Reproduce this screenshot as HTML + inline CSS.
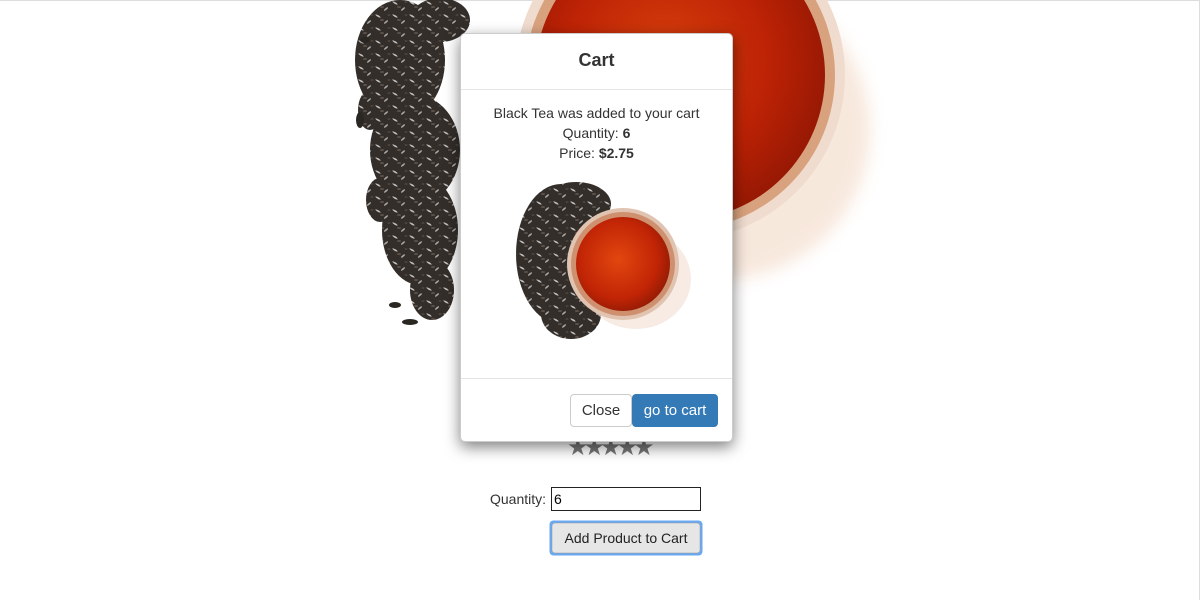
<!DOCTYPE html>
<html><head><style>
body{margin:0;width:1200px;height:600px;overflow:hidden;background:#fff;font-family:"Liberation Sans",sans-serif;position:relative;color:#333}
.abs{position:absolute}
.modal{left:460px;top:33px;width:273px;height:409px;background:#fff;border-radius:5px;box-shadow:0 5px 15px rgba(0,0,0,.5);border:1px solid rgba(0,0,0,.2);box-sizing:border-box}
.btn{position:absolute;top:360px;height:33px;box-sizing:border-box;border-radius:4px;font-size:15px;line-height:31px;text-align:center}
</style></head><body>
<svg class="abs" style="left:0;top:0" width="1200" height="600">
<defs>
<radialGradient id="tea" cx="0.45" cy="0.45" r="0.6"><stop offset="0" stop-color="#d8400c"/><stop offset="0.6" stop-color="#bc2205"/><stop offset="1" stop-color="#921703"/></radialGradient>
<radialGradient id="tea2" cx="0.45" cy="0.45" r="0.6"><stop offset="0" stop-color="#e2470f"/><stop offset="0.7" stop-color="#c02405"/><stop offset="1" stop-color="#8e1a05"/></radialGradient>
<filter id="b"><feGaussianBlur stdDeviation="8"/></filter>
<pattern id="leaf" width="17" height="13" patternUnits="userSpaceOnUse">
<rect width="17" height="13" fill="#332e2a"/>
<ellipse cx="4" cy="3" rx="3" ry="0.8" fill="#fff" opacity=".7" transform="rotate(30 4 3)"/>
<ellipse cx="12" cy="9" rx="2.5" ry="0.8" fill="#fff" opacity=".6" transform="rotate(-40 12 9)"/>
<ellipse cx="8" cy="7" rx="2" ry="1" fill="#5a5048"/>
<ellipse cx="15" cy="2" rx="1.5" ry="1" fill="#4a423c"/>
</pattern>
</defs>
<line x1="0" y1="0.5" x2="1200" y2="0.5" stroke="#ddd"/>
<line x1="1199.5" y1="0" x2="1199.5" y2="600" stroke="#ddd"/>
<ellipse cx="720" cy="130" rx="150" ry="150" fill="#f3d9c6" filter="url(#b)" opacity=".6"/>
<circle cx="680" cy="75" r="165" fill="#f0dccf"/>
<circle cx="680" cy="75" r="155" fill="#d9a27f"/>
<circle cx="680" cy="75" r="145" fill="url(#tea)"/>
<g fill="url(#leaf)">
<ellipse cx="400" cy="60" rx="45" ry="60"/>
<ellipse cx="415" cy="150" rx="45" ry="55"/>
<ellipse cx="420" cy="230" rx="38" ry="55"/>
<ellipse cx="432" cy="290" rx="22" ry="30"/>
<ellipse cx="440" cy="20" rx="30" ry="22"/>
<ellipse cx="370" cy="110" rx="12" ry="20"/>
<ellipse cx="380" cy="200" rx="14" ry="22"/>
</g>
<g fill="#2a2622">
<ellipse cx="360" cy="120" rx="4" ry="8"/>
<ellipse cx="365" cy="40" rx="5" ry="3"/>
<ellipse cx="395" cy="305" rx="6" ry="3"/>
<ellipse cx="410" cy="322" rx="8" ry="3"/>
</g>
<text x="567" y="455" font-size="24" letter-spacing="-5" fill="#777">★★★★★</text>
<text x="490" y="504" font-size="14" fill="#333">Quantity:</text>
<rect x="551.5" y="487.5" width="149" height="23" fill="#fff" stroke="#222"/>
<text x="554" y="504" font-size="14" fill="#000">6</text>
<rect x="549.5" y="520.5" width="153" height="35" rx="4" fill="#6aa8ef"/>
<rect x="552" y="523" width="148" height="30" rx="3" fill="#e6e6e6" stroke="#999" stroke-width=".5"/>
<text x="626" y="543" font-size="14" fill="#222" text-anchor="middle">Add Product to Cart</text>
</svg>
<div class="abs modal">
<div style="height:55px;border-bottom:1px solid #e5e5e5;text-align:center;font-weight:bold;font-size:18px;line-height:52px">Cart</div>
<div style="text-align:center;font-size:14px;line-height:20px;padding-top:13px">Black Tea was added to your cart<br>Quantity: <b>6</b><br>Price: <b>$2.75</b></div>
<svg class="abs" style="left:40px;top:140px" width="200" height="180">
<g fill="url(#leaf)">
<ellipse cx="60" cy="80" rx="45" ry="70"/><ellipse cx="75" cy="30" rx="35" ry="22"/><ellipse cx="70" cy="140" rx="30" ry="25"/>
</g>
<ellipse cx="135" cy="105" rx="55" ry="50" fill="#f3e3d8" opacity=".7"/>
<circle cx="122" cy="90" r="56" fill="#e0c3b0"/>
<circle cx="122" cy="90" r="52" fill="#cf9070"/>
<circle cx="122" cy="90" r="47" fill="url(#tea2)"/>
</svg>
<div class="abs" style="left:0;right:0;top:344px;border-top:1px solid #e5e5e5"></div>
<div class="btn" style="left:109px;width:62px;border:1px solid #ccc;background:#fff;color:#333">Close</div>
<div class="btn" style="left:171px;width:86px;background:#337ab7;color:#fff;font-size:15px;line-height:33px">go to cart</div>
</div>
</body></html>
